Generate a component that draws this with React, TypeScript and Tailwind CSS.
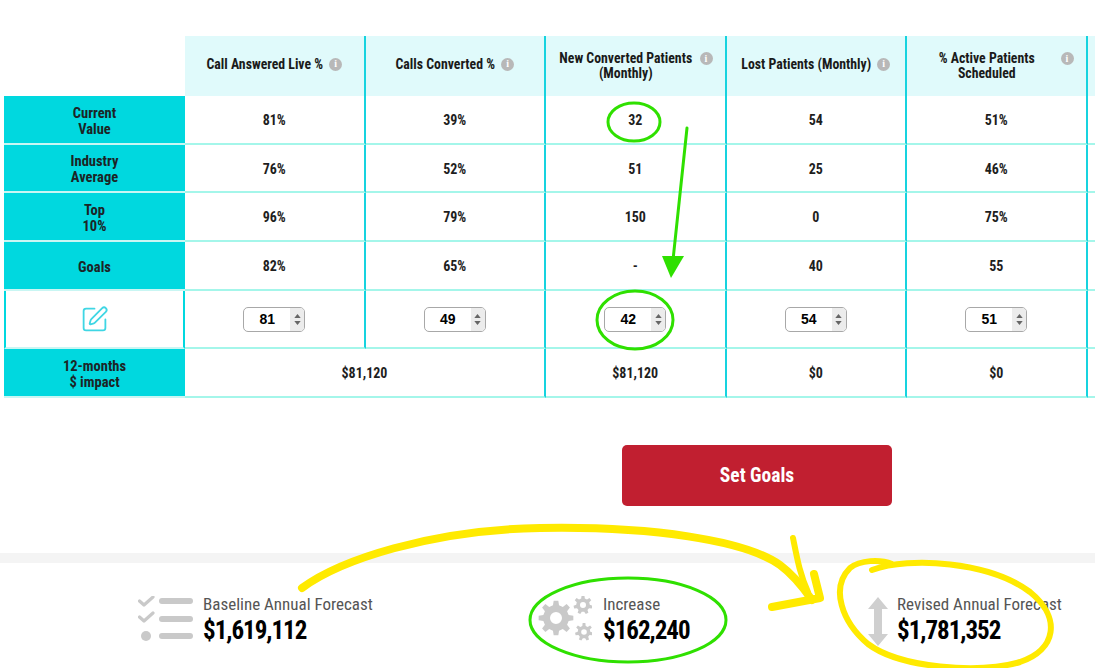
import React from "react";
import { SquarePen } from "lucide-react";

const F = "[font-family:'Liberation_Sans_Narrow','Roboto_Condensed',Roboto,sans-serif]";

function gearPath(cx: number, cy: number, ro: number, ri: number, n: number, hole: number) {
  const step = (Math.PI * 2) / n;
  const pts: string[] = [];
  for (let i = 0; i < n; i++) {
    const a = i * step - Math.PI / 2;
    const seq: [number, number][] = [
      [ri, a - 0.3 * step],
      [ro, a - 0.17 * step],
      [ro, a + 0.17 * step],
      [ri, a + 0.3 * step],
    ];
    for (const [r, ang] of seq) {
      pts.push(`${(cx + r * Math.cos(ang)).toFixed(2)} ${(cy + r * Math.sin(ang)).toFixed(2)}`);
    }
  }
  const outer = "M" + pts.join(" L") + " Z";
  const h = `M${cx + hole} ${cy} A${hole} ${hole} 0 1 0 ${cx - hole} ${cy} A${hole} ${hole} 0 1 0 ${cx + hole} ${cy} Z`;
  return outer + " " + h;
}

function Info() {
  return (
    <div className="flex w-[13px] h-[13px] mt-[1px] shrink-0 rounded-full bg-[#b8b8b8] items-center justify-center text-white text-[10px] font-bold leading-none [font-family:'Liberation_Serif',serif]">
      i
    </div>
  );
}

function NumBox({ v }: { v: string }) {
  return (
    <div className="w-[62px] h-[25px] border border-[#a8a8a8] rounded-[5px] bg-white flex overflow-hidden">
      <span className="flex-1 flex items-center justify-center text-[14px] font-bold text-black [font-family:'Liberation_Sans',Arial,sans-serif]">
        {v}
      </span>
      <span className="w-[14px] bg-[#ececec] flex flex-col items-center justify-center gap-[3px]">
        <svg width="7" height="4" viewBox="0 0 8 5"><path d="M4 0 L8 5 L0 5 Z" fill="#666" /></svg>
        <svg width="7" height="4" viewBox="0 0 8 5"><path d="M0 0 L8 0 L4 5 Z" fill="#666" /></svg>
      </span>
    </div>
  );
}

const headers: { t: React.ReactNode; wrap?: boolean }[] = [
  { t: "Call Answered Live %" },
  { t: "Calls Converted %" },
  { t: <>New Converted Patients<br />(Monthly)</>, wrap: true },
  { t: "Lost Patients (Monthly)" },
  { t: <>% Active Patients<br />Scheduled</>, wrap: true },
  { t: "" },
];

const rows: { label: React.ReactNode; vals: string[]; h: string }[] = [
  { label: <>Current<br />Value</>, vals: ["81%", "39%", "32", "54", "51%", ""], h: "h-[49px]" },
  { label: <>Industry<br />Average</>, vals: ["76%", "52%", "51", "25", "46%", ""], h: "h-[48px]" },
  { label: <>Top<br />10%</>, vals: ["96%", "79%", "150", "0", "75%", ""], h: "h-[49px]" },
  { label: "Goals", vals: ["82%", "65%", "-", "40", "55", ""], h: "h-[49px]" },
];

const cellBorder = "border-r-2 border-r-[#16d3df] border-b-2 border-b-[#a4f6ea]";
const labelCls = "w-[181px] shrink-0 bg-[#00d8df] border-b-2 border-b-[#c9f6f3] pt-[4px] flex items-center justify-center text-center text-[14.5px] leading-[16px] font-bold text-[#1c2426]";
const valCls = "w-[180.5px] shrink-0 pt-[2px] flex items-center justify-center text-[14px] font-bold text-[#1e1e1e]";

export default function App() {
  return (
    <div className={`relative w-[1095px] h-[668px] overflow-hidden bg-white ${F}`}>
      {/* table */}
      <div className="pt-[36px] pl-[4px]">
        {/* header */}
        <div className="flex h-[60px]">
          <div className="w-[181px] shrink-0" />
          {headers.map((h, i) => (
            <div
              key={i}
              className="w-[180.5px] shrink-0 bg-[#e0fafb] border-r-2 border-r-[#16d3df] flex items-center justify-center px-[12px]"
            >
              {h.t !== "" && (
                <div className={`flex items-start gap-[6px] ${h.wrap ? "w-full" : "-mt-[4px]"}`}>
                  <div className={`${h.wrap ? "flex-1" : ""} text-center text-[13.8px] leading-[15px] font-bold text-[#1a1a1a]`}>
                    {h.t}
                  </div>
                  <Info />
                </div>
              )}
            </div>
          ))}
        </div>
        {rows.map((r, ri) => (
          <div key={ri} className={`flex ${r.h}`}>
            <div className={labelCls}>{r.label}</div>
            {r.vals.map((v, i) => (
              <div key={i} className={`${valCls} ${cellBorder}`}>
                {v}
              </div>
            ))}
          </div>
        ))}
        {/* edit row */}
        <div className="flex h-[58px]">
          <div className="w-[181px] shrink-0 bg-white border-x-2 border-x-[#00d8df] border-b-2 border-b-[#c9f6f3] flex items-center justify-center">
            <SquarePen size={29} strokeWidth={1.5} color="#3fd6e4" />
          </div>
          {["81", "49", "42", "54", "51", ""].map((v, i) => (
            <div key={i} className={`w-[180.5px] shrink-0 ${cellBorder} flex items-center justify-center`}>
              {v && <NumBox v={v} />}
            </div>
          ))}
        </div>
        {/* impact row */}
        <div className="flex h-[49px]">
          <div className={labelCls}>12-months<br />$ impact</div>
          <div className={`w-[361px] shrink-0 pt-[2px] ${cellBorder} flex items-center justify-center text-[14px] font-bold text-[#1e1e1e]`}>
            $81,120
          </div>
          {["$81,120", "$0", "$0", ""].map((v, i) => (
            <div key={i} className={`${valCls} ${cellBorder}`}>
              {v}
            </div>
          ))}
        </div>
      </div>

      {/* button */}
      <div className="pt-[47px] pl-[622px]">
        <button className="w-[270px] h-[61px] rounded-[5px] bg-[#c11f30] text-white text-[19.5px] font-bold">
          Set Goals
        </button>
      </div>

      {/* band */}
      <div className="mt-[47px] h-[10px] bg-[#f4f4f4]" />

      {/* summary */}
      <div className="flex pt-[31px] pl-[138px]">
        <div className="w-[400px] shrink-0 flex items-start gap-[10px]">
          <svg width="55" height="45" viewBox="0 0 55 45" className="mt-[2px] shrink-0">
            <path d="M1.5 5 L6 9 L15 1" fill="none" stroke="#c9c9c9" strokeWidth="3.2" strokeLinecap="round" strokeLinejoin="round" />
            <rect x="21" y="2" width="34" height="6" rx="3" fill="#c9c9c9" />
            <path d="M1.5 21 L6 25 L15 17" fill="none" stroke="#c9c9c9" strokeWidth="3.2" strokeLinecap="round" strokeLinejoin="round" />
            <rect x="21" y="20" width="34" height="6" rx="3" fill="#c9c9c9" />
            <circle cx="8" cy="40" r="5" fill="#c9c9c9" />
            <rect x="21" y="37" width="34" height="6" rx="3" fill="#c9c9c9" />
          </svg>
          <div>
            <div className="text-[17px] leading-[20px] text-[#555]">Baseline Annual Forecast</div>
            <div className="mt-[2px] text-[25px] leading-[30px] font-bold text-black tracking-[-0.04em]">$1,619,112</div>
          </div>
        </div>
        <div className="w-[330px] shrink-0 flex items-start gap-[11px]">
          <svg width="54" height="47" viewBox="0 0 54 47" className="mt-[2px] shrink-0">
            <path d={gearPath(18, 22, 17.5, 13, 8, 6)} fill="#c9c9c9" fillRule="evenodd" />
            <path d={gearPath(45, 9, 9.5, 6.8, 7, 3)} fill="#c9c9c9" fillRule="evenodd" />
            <path d={gearPath(46, 36, 9, 6.3, 7, 2.8)} fill="#c9c9c9" fillRule="evenodd" />
          </svg>
          <div>
            <div className="text-[17px] leading-[20px] text-[#555]">Increase</div>
            <div className="mt-[2px] text-[25px] leading-[30px] font-bold text-black tracking-[-0.04em]">$162,240</div>
          </div>
        </div>
        <div className="flex items-start gap-[9px]">
          <svg width="20" height="49" viewBox="0 0 20 49" className="mt-[3px] shrink-0">
            <path d="M10 0 L20 12 L14 12 L14 37 L20 37 L10 49 L0 37 L6 37 L6 12 L0 12 Z" fill="#cfcfcf" />
          </svg>
          <div>
            <div className="text-[17px] leading-[20px] text-[#555]">Revised Annual Forecast</div>
            <div className="mt-[2px] text-[25px] leading-[30px] font-bold text-black tracking-[-0.04em]">$1,781,352</div>
          </div>
        </div>
      </div>

      {/* annotations */}
      <svg className="absolute inset-0 pointer-events-none" width="1095" height="668" viewBox="0 0 1095 668">
        <g fill="none" stroke="#2fe000" strokeWidth="3">
          <ellipse cx="634" cy="122" rx="26" ry="19" />
          <ellipse cx="635" cy="320" rx="38" ry="29" />
          <ellipse cx="628" cy="620" rx="98" ry="42" />
          <path d="M687 128 L673 260" strokeLinecap="round" />
        </g>
        <path d="M662 256 L684 256 L671 278 Z" fill="#2fe000" />
        <g fill="none" stroke="#ffea00" strokeLinecap="round" strokeLinejoin="round">
          <path d="M302 588 C 340 560, 430 530, 540 528 C 650 526, 745 540, 780 565 C 795 576, 805 590, 812 600" strokeWidth="8" />
          <path d="M793 538 C 797 558, 800 575, 808 592" strokeWidth="6" />
          <path d="M772 607 L 820 598 L 814 574" strokeWidth="8" />
          <path d="M872 570 C 910 556, 990 562, 1030 592 C 1062 618, 1056 650, 1020 662 C 978 674, 900 668, 868 644 C 842 622, 830 588, 850 568 C 860 560, 880 559, 892 564" strokeWidth="6" />
        </g>
      </svg>
    </div>
  );
}
